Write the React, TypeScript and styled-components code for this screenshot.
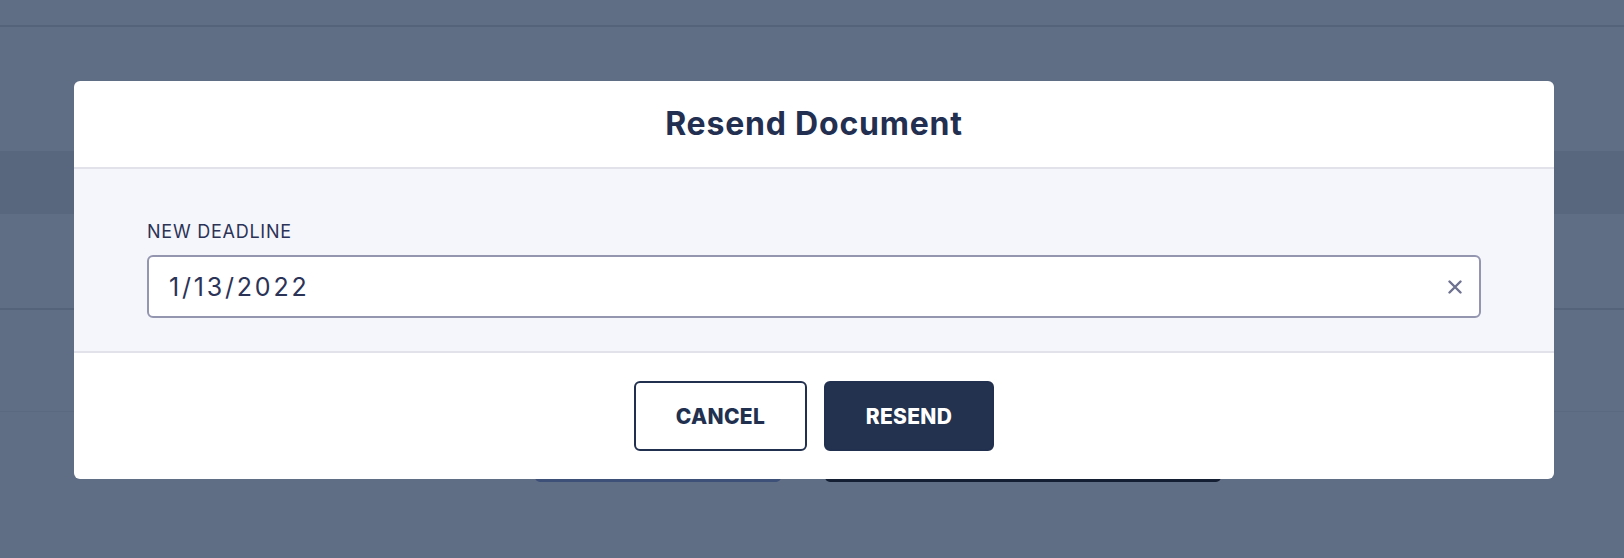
import React, { useState } from "react";
import styled, { createGlobalStyle } from "styled-components";

const GlobalStyle = createGlobalStyle`
  html, body {
    margin: 0;
    padding: 0;
  }
  body {
    font-family: Inter, "Noto Sans", sans-serif;
    background: #5f6d85;
  }
`;

// the dimmed page that sits behind the dialog
const Page = styled.div`
  position: relative;
  min-height: 558px;
  background: #5f6d85;
  overflow: hidden;
`;

const TopBar = styled.div`
  height: 25px;
  border-bottom: 2px solid #54627a;
`;

const TableHead = styled.div`
  margin-top: 124px;
  height: 63px;
  background: #58667e;
`;

const TableRow = styled.div<{ $height: number; $line: string }>`
  height: ${(p) => p.$height}px;
  border-bottom: ${(p) => p.$line};
`;

const PageActions = styled.div`
  display: flex;
  gap: 44px;
  margin-top: 10px;
  padding-left: 535px;
`;

const PageButton = styled.div<{ $width: number; $bg: string }>`
  width: ${(p) => p.$width}px;
  height: 60px;
  border-radius: 5px;
  background: ${(p) => p.$bg};
`;

const Modal = styled.div`
  position: absolute;
  top: 81px;
  left: 74px;
  width: 1480px;
  background: #ffffff;
  border-radius: 6px;
  overflow: hidden;
`;

const ModalHeader = styled.div`
  height: 86px;
  display: flex;
  align-items: center;
  justify-content: center;
  border-bottom: 2px solid #e1e2ea;
`;

const Title = styled.h2`
  margin: 0;
  font-family: Inter, sans-serif;
  font-size: 32px;
  font-weight: 700;
  line-height: 1.21;
  letter-spacing: 0.8px;
  color: #232f50;
`;

const ModalBody = styled.div`
  background: #f5f6fb;
  padding: 52px 73px 33px;
  border-bottom: 2px solid #e1e2ea;
`;

const Label = styled.label`
  display: block;
  margin-bottom: 12px;
  font-family: Inter, sans-serif;
  font-size: 18px;
  line-height: 22px;
  letter-spacing: 0.75px;
  color: #2b3357;
`;

const InputWrap = styled.div`
  display: flex;
  align-items: center;
  height: 63px;
  box-sizing: border-box;
  padding: 0 14px 0 20px;
  background: #ffffff;
  border: 2px solid #9496b0;
  border-radius: 6px;
`;

const DateInput = styled.input`
  flex: 1;
  border: none;
  outline: none;
  background: transparent;
  padding: 0;
  font-family: Inter, sans-serif;
  font-size: 25px;
  letter-spacing: 2.8px;
  color: #2b3357;
`;

const ClearButton = styled.button`
  display: flex;
  align-items: center;
  justify-content: center;
  width: 20px;
  height: 20px;
  padding: 0;
  border: none;
  background: none;
  cursor: pointer;
  color: #6e7190;
`;

const ModalFooter = styled.div`
  display: flex;
  justify-content: center;
  gap: 17px;
  padding: 28px 0 28px;
`;

const Button = styled.button<{ $primary?: boolean; $width: number }>`
  width: ${(p) => p.$width}px;
  height: 70px;
  box-sizing: border-box;
  border-radius: 6px;
  border: 2px solid #22304f;
  background: ${(p) => (p.$primary ? "#22324f" : "#ffffff")};
  color: ${(p) => (p.$primary ? "#ffffff" : "#22304f")};
  font-family: Inter, sans-serif;
  font-size: 21px;
  font-weight: 800;
  letter-spacing: 0.3px;
  cursor: pointer;
`;

function ClearIcon() {
  return (
    <svg width="14" height="14" viewBox="0 0 14 14" fill="none">
      <path
        d="M1.5 1.5L12.5 12.5M12.5 1.5L1.5 12.5"
        stroke="currentColor"
        strokeWidth="2.4"
        strokeLinecap="round"
      />
    </svg>
  );
}

export default function App() {
  const [deadline, setDeadline] = useState("1/13/2022");

  return (
    <>
      <GlobalStyle />
      <Page>
        <TopBar />
        <TableHead />
        <TableRow $height={94} $line="2px solid #55637a" />
        <TableRow $height={101} $line="1px solid #5a6880" />
        <PageActions>
          <PageButton $width={246} $bg="#3c5078" />
          <PageButton $width={396} $bg="#151f33" />
        </PageActions>

        <Modal>
          <ModalHeader>
            <Title>Resend Document</Title>
          </ModalHeader>
          <ModalBody>
            <Label htmlFor="deadline">NEW DEADLINE</Label>
            <InputWrap>
              <DateInput
                id="deadline"
                value={deadline}
                onChange={(e) => setDeadline(e.target.value)}
              />
              <ClearButton onClick={() => setDeadline("")}>
                <ClearIcon />
              </ClearButton>
            </InputWrap>
          </ModalBody>
          <ModalFooter>
            <Button $width={173}>CANCEL</Button>
            <Button $width={170} $primary>
              RESEND
            </Button>
          </ModalFooter>
        </Modal>
      </Page>
    </>
  );
}
